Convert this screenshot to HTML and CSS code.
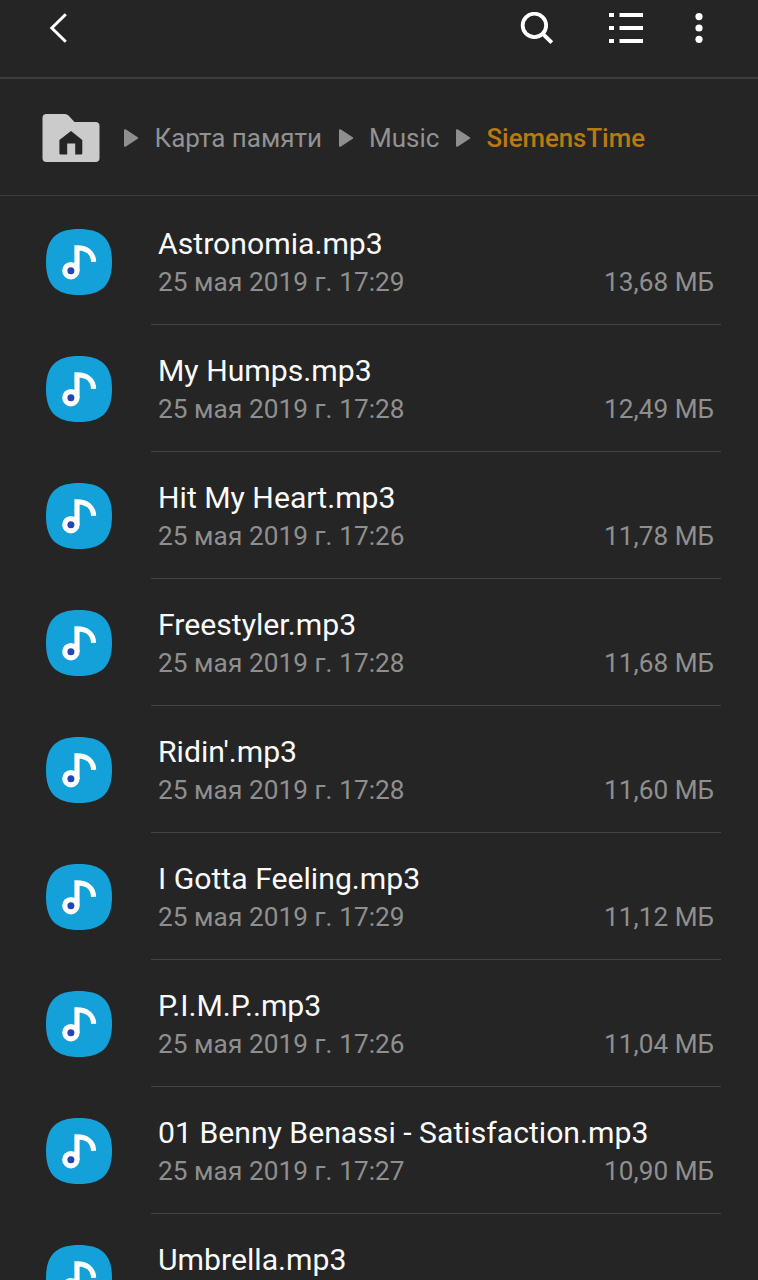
FILE: index.html
```
<!DOCTYPE html>
<html lang="ru">
<head>
    <meta charset="UTF-8">
    <meta name="viewport" content="width=device-width, initial-scale=1.0">
    <title>SiemensTime</title>
    <link rel="stylesheet" href="styles.css">
</head>
<body>
    <svg class="sprite" aria-hidden="true">
        <symbol id="note" viewBox="0 0 66 66">
            <path fill="#14a0d8" d="M33 0C56 0 66 10 66 33S56 66 33 66 0 56 0 33 10 0 33 0Z"/>
            <path fill="none" stroke="#fff" stroke-width="5.2" d="M31 42V18.900C40.500 18.900 47.400 23.700 47.600 32.900"/>
            <circle cx="24.900" cy="41.700" r="8.700" fill="#fff"/>
            <circle cx="24.900" cy="41.700" r="3.500" fill="#2545b4"/>
        </symbol>
        <symbol id="arrow" viewBox="0 0 16 20">
            <path fill="#8f8f8f" stroke="#8f8f8f" stroke-width="2" stroke-linejoin="round" d="M2 2.2 14.2 10 2 17.8Z"/>
        </symbol>
    </svg>

    <header class="toolbar">
        <button class="back" aria-label="Назад">
            <svg width="20" height="32" viewBox="0 0 20 32">
                <path fill="none" stroke="#fff" stroke-width="3" d="M17.8 2.3 3.8 16 17.8 29.7"/>
            </svg>
        </button>
        <div class="actions">
            <button aria-label="Поиск">
                <svg width="34" height="34" viewBox="0 0 34 34">
                    <circle cx="14.4" cy="13.400" r="11.7" fill="none" stroke="#fff" stroke-width="3.8"/>
                    <path stroke="#fff" stroke-width="4" d="M22.6 21.6 31.8 30.6"/>
                </svg>
            </button>
            <button aria-label="Вид">
                <svg width="36" height="32" viewBox="0 0 36 32">
                    <path fill="#fff" d="M1 1h5v4H1zM11.5 1H35v4H11.5zM1 14h5v4H1zM11.5 14H35v4H11.5zM1 27h5v4H1zM11.5 27H35v4H11.5z"/>
                </svg>
            </button>
            <button aria-label="Ещё">
                <svg width="8" height="32" viewBox="0 0 8 32">
                    <g fill="#fff">
                        <circle cx="4" cy="4.6" r="3.6"/>
                        <circle cx="4" cy="16" r="3.6"/>
                        <circle cx="4" cy="27.3" r="3.6"/>
                    </g>
                </svg>
            </button>
        </div>
    </header>

    <nav class="breadcrumbs">
        <svg class="home" width="58" height="48" viewBox="0 0 58 48">
            <path fill="#cbcbcb" d="M4.5 0H23Q25 0 26.500 1.500L32.500 8H53.500Q57.500 8 57.500 12V44Q57.500 48 53.500 48H4.500Q.5 48 .5 44V4Q.5 0 4.500 0Z"/>
            <path fill="#252525" d="M29 17 40.300 26V39.300Q40.300 40.500 39 40.500H33.200V29.500H25.200V40.500H18.700Q17.400 40.500 17.400 39.300V26Z"/>
        </svg>
        <svg class="arrow"><use href="#arrow"/></svg>
        <span class="crumb">Карта памяти</span>
        <svg class="arrow"><use href="#arrow"/></svg>
        <span class="crumb">Music</span>
        <svg class="arrow"><use href="#arrow"/></svg>
        <span class="crumb current">SiemensTime</span>
    </nav>

    <main class="files">
        <div class="file">
            <svg class="icon"><use href="#note"/></svg>
            <div class="info">
                <div class="name">Astronomia.mp3</div>
                <div class="meta"><span class="date">25 мая 2019 г. 17:29</span><span>13,68 МБ</span></div>
            </div>
        </div>
        <div class="file">
            <svg class="icon"><use href="#note"/></svg>
            <div class="info">
                <div class="name">My Humps.mp3</div>
                <div class="meta"><span class="date">25 мая 2019 г. 17:28</span><span>12,49 МБ</span></div>
            </div>
        </div>
        <div class="file">
            <svg class="icon"><use href="#note"/></svg>
            <div class="info">
                <div class="name">Hit My Heart.mp3</div>
                <div class="meta"><span class="date">25 мая 2019 г. 17:26</span><span>11,78 МБ</span></div>
            </div>
        </div>
        <div class="file">
            <svg class="icon"><use href="#note"/></svg>
            <div class="info">
                <div class="name">Freestyler.mp3</div>
                <div class="meta"><span class="date">25 мая 2019 г. 17:28</span><span>11,68 МБ</span></div>
            </div>
        </div>
        <div class="file">
            <svg class="icon"><use href="#note"/></svg>
            <div class="info">
                <div class="name">Ridin'.mp3</div>
                <div class="meta"><span class="date">25 мая 2019 г. 17:28</span><span>11,60 МБ</span></div>
            </div>
        </div>
        <div class="file">
            <svg class="icon"><use href="#note"/></svg>
            <div class="info">
                <div class="name">I Gotta Feeling.mp3</div>
                <div class="meta"><span class="date">25 мая 2019 г. 17:29</span><span>11,12 МБ</span></div>
            </div>
        </div>
        <div class="file">
            <svg class="icon"><use href="#note"/></svg>
            <div class="info">
                <div class="name">P.I.M.P..mp3</div>
                <div class="meta"><span class="date">25 мая 2019 г. 17:26</span><span>11,04 МБ</span></div>
            </div>
        </div>
        <div class="file">
            <svg class="icon"><use href="#note"/></svg>
            <div class="info">
                <div class="name">01 Benny Benassi - Satisfaction.mp3</div>
                <div class="meta"><span class="date">25 мая 2019 г. 17:27</span><span>10,90 МБ</span></div>
            </div>
        </div>
        <div class="file">
            <svg class="icon"><use href="#note"/></svg>
            <div class="info">
                <div class="name">Umbrella.mp3</div>
            </div>
        </div>
    </main>
</body>
</html>
```
FILE: styles.css
```
* {
    box-sizing: border-box;
}

body {
    margin: 0;
    height: 1280px;
    overflow: hidden;
    background-color: #252525;
    color: #fafafa;
    font-family: Roboto, sans-serif;
}

svg {
    display: block;
}

.sprite {
    display: none;
}

button {
    padding: 0;
    border: none;
    background: none;
    cursor: pointer;
}

.toolbar {
    display: flex;
    justify-content: space-between;
    height: 79px;
    padding: 12px 55px 0 48px;
    border-bottom: 2px solid #3d3d3d;
}

.toolbar button {
    display: block;
    height: 32px;
}

.actions {
    display: flex;
}

.actions button:nth-child(2) {
    margin: 0 51px 0 54px;
}

.breadcrumbs {
    display: flex;
    align-items: center;
    height: 117px;
    padding: 2px 42px 0;
    border-bottom: 1px solid #3d3d3d;
    font-size: 26px;
}

.home {
    margin-right: 23px;
}

.arrow {
    flex: none;
    width: 16px;
    height: 20px;
}

.crumb {
    color: #929292;
    white-space: nowrap;
    margin: 0 15.5px;
}

.crumb.current {
    color: #b97a12;
    font-size: 25.8px;
    font-weight: 500;
}

.files {
    padding-top: 2px;
}

.file {
    display: flex;
    height: 127px;
    padding: 0 37px 0 46px;
}

.icon {
    flex: none;
    width: 66px;
    height: 66px;
    margin: 31px 39px 0 0;
}

.info {
    flex: 1;
    padding: 28px 7px 0 7px;
    border-bottom: 1px solid #444;
}

.name {
    font-size: 30.2px;
    line-height: 36px;
    white-space: nowrap;
}

.meta {
    display: flex;
    justify-content: space-between;
    margin-top: 4px;
    color: #8f8f8f;
    font-size: 26.2px;
    line-height: 32px;
}

.date {
    letter-spacing: 0.06px;
}
```
